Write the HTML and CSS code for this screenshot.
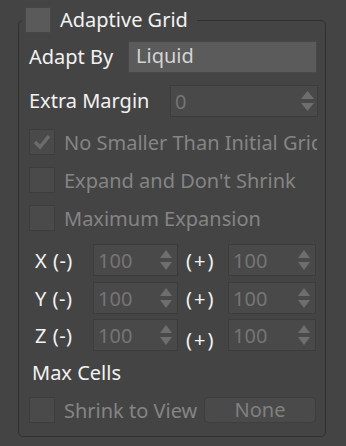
FILE: index.html
```html
<!DOCTYPE html>
<html lang="en">
<head>
    <meta charset="UTF-8">
    <meta name="viewport" content="width=device-width, initial-scale=1.0">
    <title>Adaptive Grid</title>
    <link rel="stylesheet" href="styles.css">
</head>
<body>

<!-- Adaptive Grid rollout -->
<fieldset class="group">
    <legend class="group-title">
        <span class="check check-on"></span>
        <span class="title-text">Adaptive Grid</span>
    </legend>

    <div class="row row-adapt">
        <span class="label">Adapt By</span>
        <div class="dropdown">Liquid</div>
    </div>

    <div class="row row-margin">
        <span class="label">Extra Margin</span>
        <div class="spinner spinner-margin">
            <span class="spin-value">0</span>
            <svg class="spin-arrows" width="13" height="20" viewBox="0 0 13 20"><polygon points="6.5,0 13,8 0,8"/><polygon points="0,12 13,12 6.5,20"/></svg>
        </div>
    </div>

    <div class="row check-row first-check">
        <span class="check">
            <svg width="24" height="24" viewBox="0 0 24 24"><polyline points="5,12 10,17 19,6" fill="none" stroke="#6c6c6c" stroke-width="3.5"/></svg>
        </span>
        <span class="check-label">No Smaller Than Initial Grid</span>
    </div>

    <div class="row check-row">
        <span class="check"></span>
        <span class="check-label">Expand and Don't Shrink</span>
    </div>

    <div class="row check-row">
        <span class="check"></span>
        <span class="check-label">Maximum Expansion</span>
    </div>

    <!-- axis limits -->
    <div class="row axis-row axis-x">
        <span class="axis-label">X (-)</span>
        <div class="spinner spinner-minus">
            <span class="spin-value">100</span>
            <svg class="spin-arrows" width="12" height="20" viewBox="0 0 12 20"><polygon points="6,0 12,8 0,8"/><polygon points="0,12 12,12 6,20"/></svg>
        </div>
        <span class="plus">(+)</span>
        <div class="spinner spinner-plus">
            <span class="spin-value">100</span>
            <svg class="spin-arrows" width="12" height="20" viewBox="0 0 12 20"><polygon points="6,0 12,8 0,8"/><polygon points="0,12 12,12 6,20"/></svg>
        </div>
    </div>

    <div class="row axis-row">
        <span class="axis-label">Y (-)</span>
        <div class="spinner spinner-minus">
            <span class="spin-value">100</span>
            <svg class="spin-arrows" width="12" height="20" viewBox="0 0 12 20"><polygon points="6,0 12,8 0,8"/><polygon points="0,12 12,12 6,20"/></svg>
        </div>
        <span class="plus">(+)</span>
        <div class="spinner spinner-plus">
            <span class="spin-value">100</span>
            <svg class="spin-arrows" width="12" height="20" viewBox="0 0 12 20"><polygon points="6,0 12,8 0,8"/><polygon points="0,12 12,12 6,20"/></svg>
        </div>
    </div>

    <div class="row axis-row axis-z">
        <span class="axis-label">Z (-)</span>
        <div class="spinner spinner-minus">
            <span class="spin-value">100</span>
            <svg class="spin-arrows" width="12" height="20" viewBox="0 0 12 20"><polygon points="6,0 12,8 0,8"/><polygon points="0,12 12,12 6,20"/></svg>
        </div>
        <span class="plus plus-low">(+)</span>
        <div class="spinner spinner-plus">
            <span class="spin-value">100</span>
            <svg class="spin-arrows" width="12" height="20" viewBox="0 0 12 20"><polygon points="6,0 12,8 0,8"/><polygon points="0,12 12,12 6,20"/></svg>
        </div>
    </div>

    <div class="row row-cells">
        <span class="label">Max Cells</span>
    </div>

    <div class="row check-row row-shrink">
        <span class="check"></span>
        <span class="check-label shrink-label">Shrink to View</span>
        <div class="none-button">None</div>
    </div>
</fieldset>

</body>
</html>
```

FILE: styles.css
```css
body {
    margin: 0;
    padding: 0;
    background-color: #444444;
    font-family: "Noto Sans", "Open Sans", sans-serif;
    font-size: 20px;
    color: #f2f2f2;
}

/* Rollout group box */
.group {
    width: 308px;
    box-sizing: border-box;
    margin: 7px 0 0 18px;
    padding: 8px 8px 13px 10px;
    border: 1px solid #2f2f2f;
    border-radius: 5px;
    min-inline-size: 0;
}

.group-title {
    display: flex;
    align-items: center;
    height: 26px;
    margin-left: -7px;
    padding: 0 9px 0 3px;
}

.title-text {
    margin-left: 9px;
    line-height: 26px;
}

.row {
    display: flex;
    align-items: center;
}

.label {
    line-height: 24px;
}

/* Adapt By */
.row-adapt {
    height: 32px;
    justify-content: space-between;
}

.dropdown {
    width: 189px;
    height: 32px;
    box-sizing: border-box;
    padding-left: 7px;
    line-height: 28px;
    background-color: #5b5b5b;
    border: 1px solid #484848;
    color: #d4d4d4;
}

/* Spinners */
.row-margin {
    height: 32px;
    margin-top: 12px;
    justify-content: space-between;
}

.spinner {
    display: flex;
    align-items: center;
    justify-content: space-between;
    height: 32px;
    box-sizing: border-box;
    border: 1px solid #3c3c3c;
    background-color: #494949;
    color: #757575;
    padding: 0 5px 0 4px;
}

.spinner-margin {
    width: 148px;
    margin-right: -1px;
    padding-right: 3px;
}

.spin-arrows {
    fill: #6e6e6e;
}

/* Checkboxes */
.check {
    display: inline-flex;
    align-items: center;
    justify-content: center;
    width: 26px;
    height: 26px;
    box-sizing: border-box;
    background-color: #4a4a4a;
    border: 1px solid #3d3d3d;
    flex-shrink: 0;
}

.check-on {
    background-color: #5a5a5a;
    border-color: #474747;
}

.check-row {
    height: 26px;
    margin-top: 12px;
}

.check-label {
    margin-left: 9px;
    color: #858585;
    white-space: nowrap;
    overflow: hidden;
}

/* X / Y / Z limits */
.axis-row {
    height: 32px;
    margin-top: 6px;
}

.axis-x {
    margin-top: 13px;
}

.axis-z {
    margin-top: 5px;
}

.axis-label {
    width: 64px;
    padding-left: 6px;
    box-sizing: border-box;
    letter-spacing: 0.5px;
}

.spinner-minus {
    width: 85px;
}

.spinner-plus {
    width: 88px;
}

.plus {
    width: 50px;
    padding-left: 8px;
    box-sizing: border-box;
    letter-spacing: 2px;
}

.plus-low {
    margin-top: 8px;
}

.row-cells {
    height: 24px;
    margin-top: 10px;
    padding-left: 3px;
}

/* Shrink to View */
.row-shrink {
    margin-top: 12px;
}

.shrink-label {
    width: 134px;
    flex-shrink: 0;
}

.none-button {
    width: 112px;
    height: 26px;
    margin-left: 6px;
    box-sizing: border-box;
    border: 1px solid #3e3e3e;
    border-radius: 5px;
    background-color: #4a4a4a;
    color: #808080;
    text-align: center;
    line-height: 24px;
}
```
